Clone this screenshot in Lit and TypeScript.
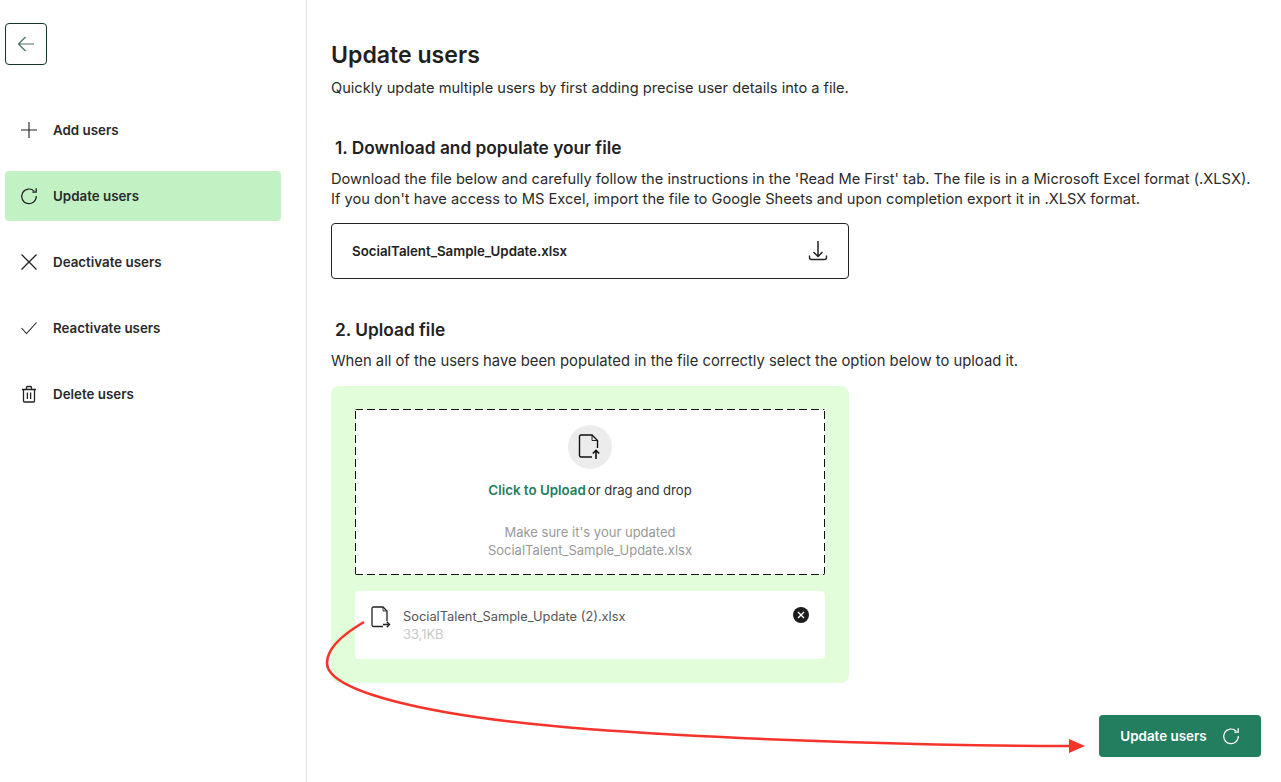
import { LitElement, html, css, svg } from "lit";
import { customElement } from "lit/decorators.js";

const refresh = svg`<path d="M14.300 4.300A7.300 7.300 0 1 0 16.300 9" fill="none" stroke="currentColor" stroke-width="1.200"/><path d="M16.200 1.300V5.200H12.300" fill="none" stroke="currentColor" stroke-width="1.300"/>`;

const items = [
  { label: "Add users", icon: svg`<path d="M9 1v16M1 9h16" fill="none" stroke="currentColor" stroke-width="1.100"/>` },
  { label: "Update users", active: true, icon: refresh },
  { label: "Deactivate users", icon: svg`<path d="M1.500 1.500l15 15M16.500 1.500l-15 15" fill="none" stroke="currentColor" stroke-width="1.300"/>` },
  { label: "Reactivate users", icon: svg`<path d="M1.500 9l5 5.500L16.500 3.500" fill="none" stroke="currentColor" stroke-width="1.100"/>` },
  { label: "Delete users", icon: svg`<path d="M2 4.500h14M3.500 4.500V16a1 1 0 0 0 1 1h9a1 1 0 0 0 1-1V4.500M6.500 4.500V2.500a1 1 0 0 1 1-1h3a1 1 0 0 1 1 1v2M7.400 7.500v6.500M10.600 7.500v6.500" fill="none" stroke="currentColor" stroke-width="1.300"/>` },
];

@customElement("app-root")
export class AppRoot extends LitElement {
  static styles = css`
    :host { display: block; position: relative; width: 1281px; height: 782px; overflow: hidden; background: #fff; font-family: Inter, "Liberation Sans", sans-serif; color: #222; }
    * { box-sizing: border-box; }
    .layout { display: flex; height: 782px; }
    .side { width: 307px; flex: none; border-right: 1px solid #e3e3e3; padding: 23px 25px 0 5px; }
    .back { width: 42px; height: 42px; border: 1px solid #12352d; border-radius: 4px; display: flex; align-items: center; justify-content: center; color: #4f6e65; }
    nav { margin-top: 40px; display: flex; flex-direction: column; gap: 16px; }
    .item { height: 50px; display: flex; align-items: center; gap: 15px; padding-left: 15px; border-radius: 4px; font-size: 13.350px; font-weight: 600; color: #2a2a2a; }
    .item svg { color: #222; }
    .item.active { background: #c2f2c4; }
    .main { flex: 1; padding: 41px 20px 0 24px; display: flex; flex-direction: column; align-items: flex-start; }
    h1 { margin: 0; font-size: 23.100px; line-height: 28px; font-weight: 600; color: #1f1f1f; }
    .sub { margin: 9px 0 0; font-size: 14.620px; line-height: 20px; color: #2b2b2b; }
    h2 { margin: 38px 0 0 4px; font-size: 17.300px; line-height: 24px; font-weight: 600; color: #222; }
    .h2b { margin-top: 39px; }
    .para { margin: 9px 0 0; font-size: 14.660px; line-height: 20px; color: #2b2b2b; white-space: nowrap; }
    .para2 { font-size: 14.810px; }
    .dl { margin-top: 14px; width: 518px; height: 56px; border: 1px solid #222; border-radius: 4px; display: flex; align-items: center; justify-content: space-between; padding: 0 20px; font-size: 13.300px; font-weight: 600; color: #222; }
    .panel { margin-top: 15px; width: 518px; height: 297px; background: #e1fdda; border-radius: 8px; padding: 23px 24px 0; display: flex; flex-direction: column; gap: 16px; }
    .drop {
      height: 166px; border-radius: 2px; display: flex; flex-direction: column; align-items: center; padding-top: 16px;
      background-color: #fff;
      background-image:
        repeating-linear-gradient(90deg, #111 0 8px, transparent 8px 12px),
        repeating-linear-gradient(90deg, #111 0 8px, transparent 8px 12px),
        repeating-linear-gradient(0deg, #111 0 8px, transparent 8px 12px),
        repeating-linear-gradient(0deg, #111 0 8px, transparent 8px 12px);
      background-size: 100% 1px, 100% 1px, 1px 100%, 1px 100%;
      background-position: 0 0, 0 100%, 0 0, 100% 0;
      background-repeat: no-repeat;
    }
    .circle { width: 44px; height: 44px; border-radius: 50%; background: #ececec; display: flex; align-items: center; justify-content: center; }
    .click { margin-top: 11px; font-size: 13.100px; line-height: 20px; color: #333; display: flex; gap: 2px; }
    .click b { color: #237d5f; font-weight: 600; font-size: 13.350px; }
    .hint { margin-top: 23px; font-size: 13px; line-height: 18px; color: #999; text-align: center; }
    .file { height: 68px; background: #fff; border-radius: 4px; display: flex; padding: 15px 16px 0 16px; gap: 12px; }
    .file .info { flex: 1; margin-top: 2px; font-size: 12.850px; line-height: 18px; color: #555; }
    .file .size { color: #c8c8c8; }
    .x { margin-top: 1px; }
    .foot { align-self: flex-end; margin-top: 32px; width: 162px; height: 42px; background: #237d5f; color: #fff; border-radius: 4px; display: flex; align-items: center; justify-content: center; gap: 15px; font-size: 13.400px; font-weight: 600; }
    .arrow { position: absolute; left: 320px; top: 610px; pointer-events: none; }
  `;

  render() {
    return html`
      <div class="layout">
        <aside class="side">
          <div class="back">
            <svg width="18" height="16" viewBox="0 0 18 16"><path d="M17 8H1.500M8.500 1L1.500 8l7 7" fill="none" stroke="currentColor" stroke-width="1.200"/></svg>
          </div>
          <nav>
            ${items.map((i) => html`
              <div class="item ${i.active ? "active" : ""}">
                <svg width="18" height="18" viewBox="0 0 18 18">${i.icon}</svg>
                <span>${i.label}</span>
              </div>`)}
          </nav>
        </aside>
        <main class="main">
          <h1>Update users</h1>
          <p class="sub">Quickly update multiple users by first adding precise user details into a file.</p>
          <h2>1. Download and populate your file</h2>
          <p class="para">Download the file below and carefully follow the instructions in the 'Read Me First' tab. The file is in a Microsoft Excel format (.XLSX).<br />If you don't have access to MS Excel, import the file to Google Sheets and upon completion export it in .XLSX format.</p>
          <div class="dl">
            <span>SocialTalent_Sample_Update.xlsx</span>
            <svg width="20" height="20" viewBox="0 0 20 20"><path d="M10 0v15.500M5.500 11l4.500 4.500 4.500-4.500" fill="none" stroke="#222" stroke-width="1.500"/><path d="M1.500 14.500v2a2 2 0 0 0 2 2h13a2 2 0 0 0 2-2v-2" fill="none" stroke="#222" stroke-width="1.400"/></svg>
          </div>
          <h2 class="h2b">2. Upload file</h2>
          <p class="para para2">When all of the users have been populated in the file correctly select the option below to upload it.</p>
          <div class="panel">
            <div class="drop">
              <div class="circle">
                <svg width="24" height="26" viewBox="0 0 24 26"><path d="M14 23H3a1.500 1.500 0 0 1-1.500-1.500V2.500A1.500 1.500 0 0 1 3 1h11l5.500 5.500V14" fill="none" stroke="#111" stroke-width="1.400"/><path d="M14 1v5.500h5.500" fill="none" stroke="#111" stroke-width="0.900"/><path d="M18 25v-8.500M14.800 19.500l3.200-3.200 3.200 3.200" fill="none" stroke="#111" stroke-width="1.600"/></svg>
              </div>
              <div class="click"><b>Click to Upload</b> <span>or drag and drop</span></div>
              <div class="hint">Make sure it's your updated<br />SocialTalent_Sample_Update.xlsx</div>
            </div>
            <div class="file">
              <svg width="20" height="22" viewBox="0 0 20 22"><path d="M12 20.500H2.500A1.500 1.500 0 0 1 1 19V2.500A1.500 1.500 0 0 1 2.500 1H12l4 4v10" fill="none" stroke="#222" stroke-width="1.300"/><path d="M12 1v4h4" fill="none" stroke="#222" stroke-width="0.900"/><path d="M12 18.500h6.500M15.800 15.800l2.700 2.700-2.700 2.700" fill="none" stroke="#222" stroke-width="1.400"/></svg>
              <div class="info">SocialTalent_Sample_Update (2).xlsx<div class="size">33,1KB</div></div>
              <svg class="x" width="16" height="16" viewBox="0 0 16 16"><circle cx="8" cy="8" r="8" fill="#1c1c1c"/><path d="M5 5l6 6M11 5l-6 6" stroke="#fff" stroke-width="1.400"/></svg>
            </div>
          </div>
          <div class="foot">
            <span>Update users</span>
            <svg width="18" height="18" viewBox="0 0 18 18">${refresh}</svg>
          </div>
        </main>
      </div>
      <svg class="arrow" width="780" height="160" viewBox="320 610 780 160">
        <path d="M364 622C340 636 327 650 327 663C327 690 420 716 587 729C750 741 950 746 1070 746" fill="none" stroke="#f5332a" stroke-width="2.600"/>
        <path d="M1069 739l16 7-16 7z" fill="#f5332a"/>
      </svg>
    `;
  }
}
